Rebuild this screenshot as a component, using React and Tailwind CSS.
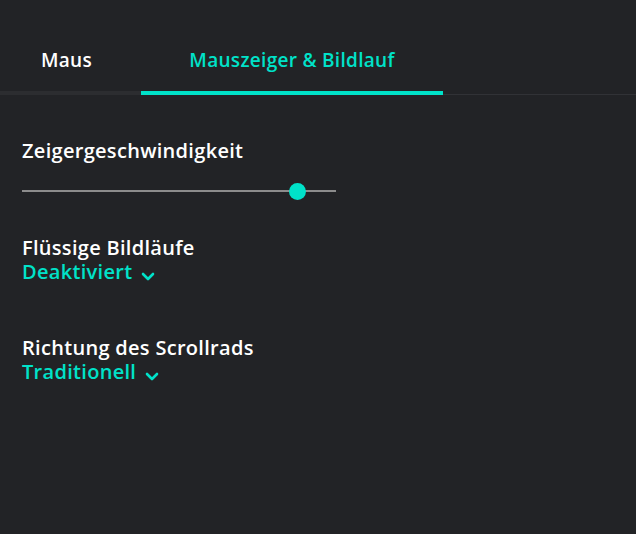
const CYAN = "text-[#00e2c9]";

function Chevron() {
  return (
    <svg width="14" height="10" viewBox="0 0 14 10" className="ml-[9px] mt-[7px]">
      <path d="M2 3 L7 8 L12 3" fill="none" stroke="#00e2c9" strokeWidth="2.6" strokeLinecap="round" strokeLinejoin="round" />
    </svg>
  );
}

function Setting({ title, value }) {
  return (
    <div className="leading-[24px]">
      <div className="text-[20px] text-white">{title}</div>
      <button className={`flex items-center text-[20px] ${CYAN}`}>
        {value}
        <Chevron />
      </button>
    </div>
  );
}

export default function App() {
  return (
    <div className="w-[636px] h-[534px] bg-[#222326] font-['Open_Sans',sans-serif] font-semibold tracking-[0.3px] overflow-hidden">
      <div className="h-[34px]" />
      <div className="flex border-b border-[#313236]">
        <div className="w-[141px] h-[61px] flex justify-center pt-[14px] border-b-[4px] border-[#2c2d30] -mb-px">
          <span className="text-[19px] text-white leading-[24px] pr-[8px]">Maus</span>
        </div>
        <div className="w-[302px] h-[61px] flex justify-center pt-[14px] border-b-[4px] border-[#00e2c9] -mb-px">
          <span className={`text-[19px] leading-[24px] ${CYAN}`}>Mauszeiger &amp; Bildlauf</span>
        </div>
      </div>
      <div className="pl-[22px] pt-[44px]">
        <div className="text-[20px] text-white leading-[24px]">Zeigergeschwindigkeit</div>
        <div className="relative w-[314px] h-[20px] mt-[18px] flex items-center">
          <div className="w-full h-[2px] bg-[#8c8c8c]" />
          <div className="absolute left-[267px] w-[17px] h-[17px] rounded-full bg-[#00e2c9]" />
        </div>
        <div className="mt-[35px] flex flex-col gap-[52px]">
          <Setting title="Flüssige Bildläufe" value="Deaktiviert" />
          <Setting title="Richtung des Scrollrads" value="Traditionell" />
        </div>
      </div>
    </div>
  );
}
